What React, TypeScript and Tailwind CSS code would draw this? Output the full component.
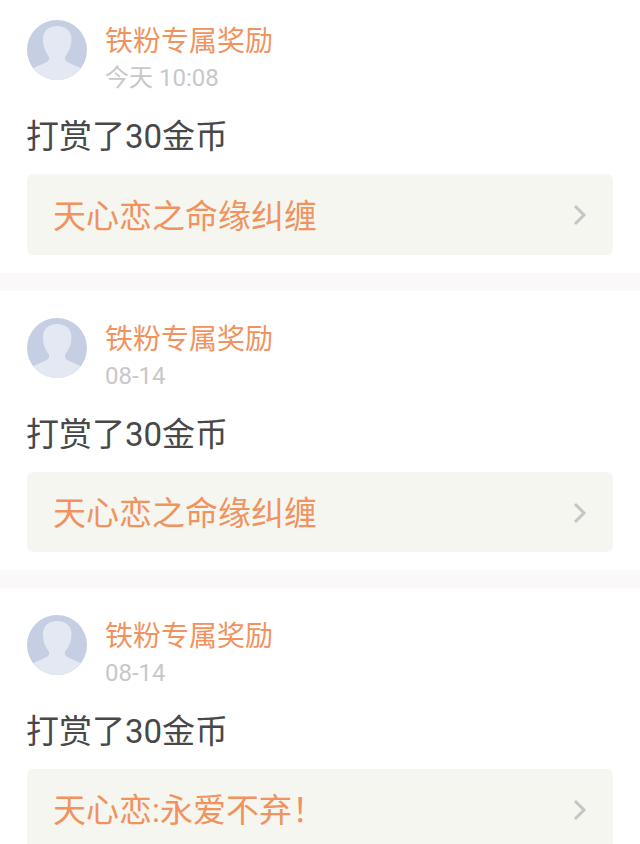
const font = 'Roboto, "Noto Sans CJK SC", sans-serif';

function Avatar() {
  return (
    <svg viewBox="0 0 60 60" className="h-[60px] w-[60px] shrink-0">
      <defs>
        <clipPath id="avatar-clip">
          <circle cx="30" cy="30" r="30" />
        </clipPath>
      </defs>
      <g clipPath="url(#avatar-clip)">
        <rect width="60" height="60" fill="#c5cee2" />
        <path
          d="M30 6c-8.500 0-14 5-14 13 0 8 2.500 13 5.500 17 1 2 1 4-1 5.500-3 2-9 4-14 6.500L3 60h54l-3.500-12c-5-2.500-11-4.500-14-6.500-2-1.500-2-3.500-1-5.500 3-4 6-9 6-17 0-8-6-13-14.500-13z"
          fill="#e4e8f2"
        />
      </g>
    </svg>
  );
}

function Chevron() {
  return (
    <svg viewBox="0 0 14 22" className="mt-px h-[22px] w-[14px]" fill="none">
      <path d="M2 2l9 9-9 9" stroke="#c4c6c2" strokeWidth="3" />
    </svg>
  );
}

function RewardCard({ time, title, first }: { time: string; title: string; first?: boolean }) {
  return (
    <div className={first ? "bg-white px-[27px] pt-5 pb-[18px]" : "bg-white px-[27px] pt-[27px] pb-[18px]"}>
      <div className="flex items-start gap-[18px]">
        <Avatar />
        <div className="flex flex-col pt-[3px]">
          <span className="text-[28px] leading-[37px] text-[#f0935f]">铁粉专属奖励</span>
          <span className="text-[24px] leading-[36px] text-[#c8c8c8]">{time}</span>
        </div>
      </div>
      <p className="mt-[17px] -ml-px text-[33px] leading-[48px] text-[#484848]">打赏了30金币</p>
      <div
        className={
          first
            ? "mt-[13px] flex h-[81px] items-center justify-between rounded-md bg-[#f5f6f0] pr-[26px] pl-[26px]"
            : "mt-[13px] flex h-[80px] items-center justify-between rounded-md bg-[#f5f6f0] pr-[26px] pl-[26px]"
        }
      >
        <span className="pt-1 text-[33px] text-[#f0935f]">{title}</span>
        <Chevron />
      </div>
    </div>
  );
}

export default function App() {
  return (
    <div className="h-[844px] w-[640px] overflow-hidden bg-[#faf8f8]" style={{ fontFamily: font }}>
      <div className="flex flex-col gap-[18px]">
        <RewardCard first time="今天 10:08" title="天心恋之命缘纠缠" />
        <RewardCard time="08-14" title="天心恋之命缘纠缠" />
        <RewardCard time="08-14" title="天心恋:永爱不弃！" />
      </div>
    </div>
  );
}
